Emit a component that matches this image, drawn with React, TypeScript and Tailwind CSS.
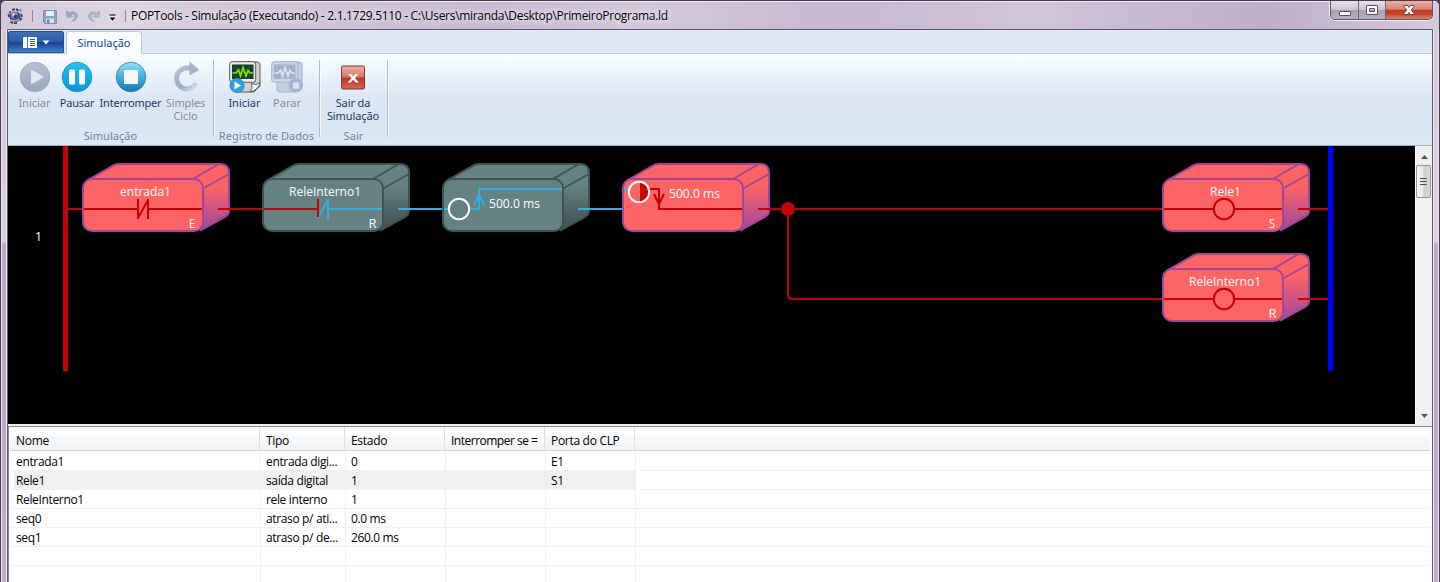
import React from "react";

const RED = "#c80000";
const CYAN = "#2fb0e6";

type BlockKind = "on" | "off";

function Block({ x, y, kind, children, exit }: { x: number; y: number; kind: BlockKind; children?: React.ReactNode; exit: string }) {
  const fill = kind === "on" ? "#ff6464" : "#648282";
  const stroke = kind === "on" ? "#a0469b" : "#415252";
  return (
    <g transform={`translate(${x} ${y})`}>
      <path d="M3 18 L31 1.6 Q33 0 37 0 H138 Q147 0 147 9 V47 Q147 51 143 53 L115 67 L100 60 L20 40 Z" fill={fill} />
      <path d="M121 24 L147 10 V47 Q147 51 143 53 L117 66 Z" fill={kind === "on" ? "url(#sideOn)" : "url(#sideOff)"} />
      <path d="M5 16.5 L31 1.6 Q33 0 37 0 H138 Q147 0 147 9 V47 Q147 50.500 143 52.800 L118 66.500" fill="none" stroke={stroke} strokeWidth="2" />
      <path d="M110 15.500 L136 0.500 M121 24.500 L147 10" fill="none" stroke={stroke} strokeWidth="2" />
      <rect x="1" y="15" width="120" height="52" rx="9" fill={fill} />
      {children}
      <rect x="1" y="15" width="120" height="52" rx="9" fill="none" stroke={stroke} strokeWidth="2" />
      <path d="M136 45 H152" stroke={exit} strokeWidth="2" />
    </g>
  );
}

function Label({ x, y, w, children }: { x: number; y: number; w: number; children: string }) {
  return (
    <text x={x} y={y} textLength={w} lengthAdjust="spacingAndGlyphs" fill="#fff" className="font-['Open_Sans',sans-serif] text-[12px]">
      {children}
    </text>
  );
}

function Diagram() {
  return (
    <svg viewBox="8 146 1407 278" width="1407" height="278" className="block shrink-0 bg-black">
      <defs>
        <linearGradient id="sideOn" x1="0" y1="0" x2="0" y2="1">
          <stop offset="0.2" stopColor="#ff6464" />
          <stop offset="0.95" stopColor="#a5489b" />
        </linearGradient>
        <linearGradient id="sideOff" x1="0" y1="0" x2="0" y2="1">
          <stop offset="0.2" stopColor="#648282" />
          <stop offset="0.95" stopColor="#415252" />
        </linearGradient>
      </defs>
      <Label x={35} y={241} w={7}>1</Label>
      <g fill="none" strokeWidth="2">
        <path d="M68 209 H83 M220 209 H263 M768 209 H1163 M1308 209 H1328 M1308 299 H1328" stroke={RED} />
        <path d="M788 209 V294 Q788 299 793 299 H1163" stroke={RED} />
        <path d="M398 209 H443 M578 209 H623" stroke={CYAN} />
      </g>
      <Block x={82} y={164} kind="on" exit={RED}>
        <path d="M2 45 H56 M56 35 V55 M66 35 V55 M56 54 L66 36 M66 45 H120" stroke={RED} strokeWidth="2" fill="none" />
        <Label x={38} y={32} w={51}>entrada1</Label>
        <Label x={107} y={64} w={6}>E</Label>
      </Block>
      <Block x={262} y={164} kind="off" exit={CYAN}>
        <path d="M56 54 L66 36 M66 35 V55 M66 45 H120" stroke={CYAN} strokeWidth="2" fill="none" />
        <path d="M2 45 H56 M56 35 V53" stroke={RED} strokeWidth="2" fill="none" />
        <Label x={27} y={32} w={72}>ReleInterno1</Label>
        <Label x={106.500} y={64} w={8}>R</Label>
      </Block>
      <Block x={442} y={164} kind="off" exit={CYAN}>
        <path d="M2 45 H8 M27 45 H37 V25 H120 M32 41 L37 30 L42 41" stroke={CYAN} strokeWidth="2" fill="none" />
        <circle cx="17" cy="45" r="10.200" fill="none" stroke="#fff" strokeWidth="2" />
        <Label x={47} y={44} w={51}>500.0 ms</Label>
      </Block>
      <Block x={622} y={164} kind="on" exit={RED}>
        <path d="M2 25 H7" stroke={CYAN} strokeWidth="2" />
        <path d="M27 25 H37 V45 H120 M32 30 L37 40 L42 30" stroke={RED} strokeWidth="2" fill="none" />
        <path d="M18 18 A10 10 0 0 1 18 38 Z" fill={RED} />
        <circle cx="17" cy="28" r="10.200" fill="none" stroke="#fff" strokeWidth="2" />
        <Label x={47} y={34} w={51}>500.0 ms</Label>
      </Block>
      <circle cx="788" cy="209" r="7" fill={RED} />
      <Block x={1162} y={164} kind="on" exit={RED}>
        <path d="M2 45 H52 M72 45 H120" stroke={RED} strokeWidth="2" />
        <circle cx="62" cy="45" r="10.200" fill="none" stroke={RED} strokeWidth="2" />
        <Label x={48} y={32} w={31}>Rele1</Label>
        <Label x={107} y={64} w={6}>S</Label>
      </Block>
      <Block x={1162} y={254} kind="on" exit={RED}>
        <path d="M2 45 H52 M72 45 H120" stroke={RED} strokeWidth="2" />
        <circle cx="62" cy="45" r="10.200" fill="none" stroke={RED} strokeWidth="2" />
        <Label x={27} y={32} w={72}>ReleInterno1</Label>
        <Label x={106.500} y={64} w={8}>R</Label>
      </Block>
      <rect x="63" y="146" width="5" height="225" fill={RED} />
      <rect x="1328" y="146" width="5" height="225" fill="#0000ff" />
    </svg>
  );
}

function TitleBar() {
  return (
    <div className="flex h-[28px] shrink-0 items-start border-t border-[#f3eef6] bg-[linear-gradient(90deg,#d3c8da_0%,#ddd5e3_8%,#d3c4da_16%,#cfc1d7_26%,#c9b9d2_34%,#d4c7dc_45%,#c8b8d2_58%,#d2c4db_72%,#bfaecb_88%,#d4cadd_100%)]">
      <div className="flex h-[27px] min-w-0 grow items-center pl-[6px]">
        <svg width="16" height="16" viewBox="0 0 16 16" className="shrink-0">
          <circle cx="8" cy="8.500" r="5.500" fill="#4a5083" />
          <path d="M2 9 Q1 5 4 4 M5 2 Q9 0 12 3 M14 6 Q16 10 12 13 M10 15 Q5 16 3 13" fill="none" stroke="#3d4556" strokeWidth="2" strokeDasharray="3 1" />
          <path d="M11 1 L15 1 L14 5 Z" fill="#8d96a8" />
          <path d="M3 6 Q6 2 11 4 M4 12 Q8 14 12 11" fill="none" stroke="#a9b3cc" strokeWidth="1.200" />
          <circle cx="7.500" cy="7.500" r="3" fill="#9da7ce" />
          <circle cx="8.500" cy="8.500" r="2" fill="#2f36a0" />
          <circle cx="6.500" cy="6.500" r="1" fill="#eef" />
        </svg>
        <div className="ml-[9px] h-[12px] w-px bg-[#8c8494]" />
        <svg width="14" height="14" viewBox="0 0 14 14" className="ml-[10px] mt-[2px] shrink-0">
          <path d="M0.500 0.500 H13.500 V13.500 H1.500 L0.500 12.500 Z" fill="#8da4c0" stroke="#7b94b4" />
          <path d="M3 1 H11 V6 H3 Z" fill="#e7edf4" />
          <path d="M3 8.500 H11 V13 H3 Z" fill="#dce4ed" />
          <path d="M4 9.500 H6.500 V13 H4 Z" fill="#6f88a8" />
        </svg>
        <svg width="12" height="13" viewBox="0 0 12 13" className="ml-[9px] mt-[2px] shrink-0">
          <path d="M0.500 1 L1.200 7.500 L7 6.500 L4.800 4.700 Q8 3 9 6 Q9 9 5.500 11.500 Q11.500 10.500 11.500 5.500 Q10 0 3.500 2.800 Z" fill="#9cacc5" stroke="#899bb8" strokeWidth="0.700" />
        </svg>
        <svg width="12" height="13" viewBox="0 0 12 13" className="ml-[10px] mt-[2px] shrink-0">
          <path transform="translate(12 0) scale(-1 1)" d="M0.500 1 L1.200 7.500 L7 6.500 L4.800 4.700 Q8 3 9 6 Q9 9 5.500 11.500 Q11.500 10.500 11.500 5.500 Q10 0 3.500 2.800 Z" fill="#acb8cb" stroke="#97a6bc" strokeWidth="0.700" />
        </svg>
        <svg width="9" height="8" viewBox="0 0 9 8" className="ml-[8px] mt-[4px] shrink-0">
          <path d="M1 2.500 H8 L8 4.500 L4.500 8 L1 4.500 Z" fill="#fff" opacity="0.700" />
          <path d="M1.500 1 H7.500" stroke="#000" />
          <path d="M1.500 3.500 H7.500 L4.500 6.700 Z" fill="#000" />
        </svg>
        <div className="ml-[8px] h-[12px] w-px bg-[#8c8494]" />
        <span className="ml-[5px] whitespace-pre font-['Open_Sans',sans-serif] text-[12px] leading-[16px] tracking-[-0.3px] text-black [text-shadow:0_0_6px_#fff,0_0_8px_#ffffffaa]">
          POPTools - Simulação (Executando) - 2.1.1729.5110 - C:\Users\miranda\Desktop\PrimeiroPrograma.ld
        </span>
      </div>
      <div className="-mt-px mr-[6px] flex h-[19px] w-[103px] shrink-0 overflow-hidden rounded-b-[5px] border border-t-0 border-[#5d5567] shadow-[0_1px_0_#f3eef6,-1px_0_0_#f3eef6]">
        <div className="flex w-[28px] items-center justify-center border-r border-[#6d6578] bg-[linear-gradient(#e7e2eb_0%,#cdc5d4_48%,#a69bb1_50%,#bbb1c6_100%)]">
          <svg width="12" height="6" viewBox="0 0 12 6" className="mt-[7px]"><rect x="0.500" y="0.500" width="11" height="4" rx="0.500" fill="#fff" stroke="#555264" /></svg>
        </div>
        <div className="flex w-[27px] items-center justify-center border-r border-[#6d6578] bg-[linear-gradient(#e7e2eb_0%,#cdc5d4_48%,#a69bb1_50%,#bbb1c6_100%)]">
          <svg width="12" height="10" viewBox="0 0 12 10"><path fillRule="evenodd" d="M0.500 0.500 H11.500 V9.500 H0.500 Z M3.500 3.500 V6.500 H8.500 V3.500 Z" fill="#fff" stroke="#555264" /></svg>
        </div>
        <div className="flex grow items-center justify-center bg-[linear-gradient(#eab0a5_0%,#d98270_46%,#bf3c25_50%,#c8452a_75%,#dc8868_100%)]">
          <svg width="12" height="11" viewBox="0 0 12 11"><path d="M1 0.500 H4.500 L6 2.500 L7.500 0.500 H11 V1.500 L8.300 5 L11 8.500 V9.500 H7.500 L6 7.500 L4.500 9.500 H1 V8.500 L3.700 5 L1 1.500 Z" fill="#fff" stroke="#55495b" /></svg>
        </div>
      </div>
    </div>
  );
}

function Disc({ tone, children }: { tone: string; children: React.ReactNode }) {
  return (
    <svg width="32" height="32" viewBox="0 0 32 32">
      <defs>
        <linearGradient id="discgrey" x1="0" y1="0" x2="0" y2="1"><stop stopColor="#bac2d2" /><stop offset="1" stopColor="#98a5c0" /></linearGradient>
        <linearGradient id="discblue" x1="0" y1="0" x2="0" y2="1"><stop stopColor="#25c2f3" /><stop offset="1" stopColor="#0795e1" /></linearGradient>
        <linearGradient id="discsky" x1="0" y1="0" x2="0" y2="1"><stop stopColor="#92e2f5" /><stop offset="0.500" stopColor="#43b1db" /><stop offset="1" stopColor="#0b78b8" /></linearGradient>
      </defs>
      <circle cx="16" cy="16" r="14.800" fill={`url(#disc${tone})`} stroke={tone === "grey" ? "#97a3bb" : tone === "blue" ? "#168fc4" : "#2c7fa6"} strokeWidth="0.800" />
      {children}
    </svg>
  );
}

function Monitor({ muted }: { muted?: boolean }) {
  const c = muted
    ? { back: "#c3cde0", front: "#cdd6e7", edge: "#a2b0ce", screen: "#a6b4d2", wave: "#dee6f2", grid: "#98a8c9" }
    : { back: "#d2d2d2", front: "#ececec", edge: "#595959", screen: "#123c2c", wave: "#83e600", grid: "#2c5b47" };
  return (
    <svg width="32" height="32" viewBox="0 0 32 32">
      <path d="M9 1 H28 Q31 1 31 4 V25 L25 31 H9 Q6 31 6 28 V4 Z" fill={c.back} stroke={c.edge} />
      <rect x="0.700" y="0.700" width="26" height="20.500" rx="2.500" fill={c.front} stroke={c.edge} />
      <rect x="3" y="3.500" width="21.500" height="14.500" fill={c.screen} />
      <path d="M3 7 H24 M3 11 H24 M3 15 H24 M8 4 V18 M14 4 V18 M20 4 V18" stroke={c.grid} strokeWidth="0.600" />
      <path d="M3.500 12 H7 L9.500 9 L11.500 15 L14 6.500 L17 15 L19 9.500 L21 12 H24" fill="none" stroke={c.wave} strokeWidth="1.700" />
      {muted ? (
        <g><circle cx="25" cy="24.500" r="7" fill="#a4b2cf" /><rect x="21.800" y="21.300" width="6.500" height="6.500" rx="0.500" fill="#dde4ef" /></g>
      ) : (
        <g>
          <path d="M20.500 31 Q24 28 22.500 22.500 Q27 25 31 21.500 Q30 29 20.500 31 Z" fill="#f5f5f5" stroke="#555" strokeWidth="0.900" />
          <circle cx="8" cy="24.500" r="7.200" fill="#2aa3dd" stroke="#1d80b8" strokeWidth="0.600" />
          <path d="M5.500 20.500 L12 24.500 L5.500 28.500 Z" fill="#fff" />
        </g>
      )}
    </svg>
  );
}

function Tool({ className, label, muted, icon }: { className: string; label: string; muted?: boolean; icon: React.ReactNode }) {
  return (
    <div className={`flex shrink-0 flex-col items-center ${className}`}>
      <div className="flex h-[32px] items-center">{icon}</div>
      <div className={`mt-[3px] whitespace-pre text-center leading-[13px] ${muted ? "text-[#8d8d8d]" : "text-[#1e395b]"}`}>{label}</div>
    </div>
  );
}

function Group({ className, title, children }: { className: string; title: string; children: React.ReactNode }) {
  return (
    <div className={`flex shrink-0 flex-col border-r border-[#afbbcf] shadow-[1px_0_0_#f6f9fd] ${className}`}>
      <div className="flex h-[69px] shrink-0 pt-[1px]">{children}</div>
      <div className="h-[8px] whitespace-pre text-center leading-[14px] tracking-[0.05px] text-[#72839c]">{title}</div>
    </div>
  );
}

function Ribbon() {
  return (
    <div className="flex h-[116px] shrink-0 flex-col bg-[#dfe9f5] font-['Noto_Sans',sans-serif] text-[11px]">
      <div className="flex h-[24px] shrink-0 items-end border-b border-[#bac9db]">
        <div className="flex h-[22px] w-[56px] items-center justify-center gap-[5px] rounded-t-[2px] border border-[#234f91] bg-[linear-gradient(#3f72b9_0%,#2b5ca8_48%,#153f88_50%,#2c69b5_80%,#3c86ce_100%)]">
          <svg width="14" height="11" viewBox="0 0 14 11"><rect width="14" height="11" rx="0.500" fill="#fff" /><path d="M4.500 0 V11" stroke="#4a76b5" /><path d="M7 2.500 H12 M7 4.500 H12 M7 6.500 H12 M7 8.500 H12" stroke="#2a5ca5" /></svg>
          <svg width="8" height="5" viewBox="0 0 8 5"><path d="M0.500 0.500 H7.500 L4 4.500 Z" fill="#fff" /></svg>
        </div>
        <div className="-mb-px ml-[2px] flex h-[23px] w-[76px] items-center justify-center rounded-t-[3px] border border-b-0 border-[#bac9db] bg-[#f8fbff] text-[#15428b]">Simulação</div>
      </div>
      <div className="flex h-[90px] shrink-0 bg-[linear-gradient(#f9fdff_0%,#e8f1fa_28%,#dce6f4_50%,#dae6f4_85%,#dde9f5_100%)] pt-[6px]">
        <Group className="h-[77px] w-[206px]" title="Simulação">
          <Tool className="ml-[5px] w-[43px]" label="Iniciar" muted icon={<Disc tone="grey"><path d="M12 8.500 L25 16 L12 23.500 Z" fill="#e5ebf4" /></Disc>} />
          <Tool className="w-[42px] tracking-[-0.15px]" label="Pausar" icon={<Disc tone="blue"><rect x="8" y="8.500" width="6" height="15" rx="1.500" fill="#fff" /><rect x="18" y="8.500" width="6" height="15" rx="1.500" fill="#fff" /></Disc>} />
          <Tool className="w-[65px] tracking-[-0.2px]" label="Interromper" icon={<Disc tone="sky"><rect x="9" y="9" width="14" height="14" fill="#f5f5f5" /></Disc>} />
          <Tool
            className="w-[45px] tracking-[-0.1px]"
            label={"Simples\nCiclo"}
            muted
            icon={
              <svg width="30" height="32" viewBox="0 0 30 32">
                <defs><linearGradient id="loop" x1="0" y1="0" x2="1" y2="1"><stop stopColor="#b8c3d5" /><stop offset="0.600" stopColor="#9cabc5" /><stop offset="1" stopColor="#dce6f4" /></linearGradient></defs>
                <path d="M20 7 H15.500 A10.500 10.500 0 1 0 25.500 22" fill="none" stroke="url(#loop)" strokeWidth="5" />
                <path d="M18.500 0.500 L28.500 9 L18.500 14.500 Z" fill="#a3b1c9" />
              </svg>
            }
          />
        </Group>
        <Group className="h-[77px] w-[106px]" title="Registro de Dados">
          <Tool className="ml-[9px] w-[43px]" label="Iniciar" icon={<Monitor />} />
          <Tool className="w-[42px]" label="Parar" muted icon={<Monitor muted />} />
        </Group>
        <Group className="h-[77px] w-[68px]" title="Sair">
          <Tool
            className="w-[66px] tracking-[-0.1px]"
            label={"Sair da\nSimulação"}
            icon={
              <svg width="24" height="25" viewBox="0 0 24 25">
                <defs><linearGradient id="exit" x1="0" y1="0" x2="0" y2="1"><stop stopColor="#efb0a4" /><stop offset="0.480" stopColor="#dd7564" /><stop offset="0.520" stopColor="#be3223" /><stop offset="1" stopColor="#d96550" /></linearGradient></defs>
                <rect x="0.500" y="1" width="23" height="23" rx="1.500" fill="url(#exit)" stroke="#7d3632" />
                <path d="M7 9 H10 L12.200 11.300 L14.500 9 H17.500 L14 13 L17.800 17.500 H14.700 L12.200 14.700 L9.700 17.500 H6.700 L10.500 13 Z" fill="#fff" />
              </svg>
            }
          />
        </Group>
      </div>
      <div className="h-px shrink-0 bg-[#dce9f5]" />
      <div className="h-px shrink-0 bg-[#9eb0c6]" />
    </div>
  );
}

function ScrollBar() {
  return (
    <div className="flex w-[17px] shrink-0 flex-col items-center border-l border-white bg-[#f0f0f0]">
      <svg width="7" height="4" viewBox="0 0 7 4" className="mt-[9px] shrink-0"><path d="M0 4 L3.500 0 L7 4 Z" fill="#555" /></svg>
      <div className="mt-[6px] flex h-[33px] w-[15px] shrink-0 flex-col items-center justify-center gap-[2px] self-start rounded-[2px] border border-[#979797] bg-[linear-gradient(90deg,#f7f7f7,#e8e8e8_45%,#cfcfcf_55%,#d8d8d8)]">
        <div className="h-px w-[7px] bg-[#505050]" />
        <div className="h-px w-[7px] bg-[#505050]" />
        <div className="h-px w-[7px] bg-[#505050]" />
      </div>
      <div className="grow" />
      <svg width="7" height="4" viewBox="0 0 7 4" className="mb-[6px] shrink-0"><path d="M0 0 L3.500 4 L7 0 Z" fill="#555" /></svg>
    </div>
  );
}

const rows = [
  ["entrada1", "entrada digi...", "0", "", "E1"],
  ["Rele1", "saída digital", "1", "", "S1"],
  ["ReleInterno1", "rele interno", "1", "", ""],
  ["seq0", "atraso p/ ati...", "0.0 ms", "", ""],
  ["seq1", "atraso p/ de...", "260.0 ms", "", ""],
  ["", "", "", "", ""],
  ["", "", "", "", ""],
];
const columns = "grid grid-cols-[251px_85px_100px_100px_90px_1fr]";

function VariableTable() {
  return (
    <div className="flex grow flex-col border-l border-[#828790] bg-white pl-px font-['Open_Sans',sans-serif] text-[12px] tracking-[-0.35px] text-black">
      <div className={`${columns} mr-[2px] h-[24px] shrink-0 border-b border-[#d5d5d5] bg-[linear-gradient(#fff_0%,#fff_40%,#f7f8fa_42%,#f1f2f4_100%)] leading-[27px]`}>
        {["Nome", "Tipo", "Estado", "Interromper se =", "Porta do CLP"].map((h) => (
          <div key={h} className={`-ml-px mr-px h-[23px] whitespace-pre border-r border-[#dfe0e2] pl-[6px] first:ml-0 ${h.endsWith("=") ? "tracking-[-0.5px]" : "tracking-[-0.3px]"}`}>{h}</div>
        ))}
      </div>
      <div className="mr-[2px] flex flex-col pt-px">
        {rows.map((row, r) => (
          <div key={r} className={`${columns} h-[19px] shrink-0 leading-[20px]`}>
            {row.map((cell, c) => (
              <div key={c} className={`border-b border-r border-[#f0f0f0] ${c === 0 ? "pl-[4px]" : ""}`}>
                <div className={`h-[18px] whitespace-pre ${c === 0 ? "pl-[2px]" : "pl-[5px]"} ${r === 1 ? "bg-[#f0f0f0]" : ""}`}>{cell}</div>
              </div>
            ))}
            <div className="border-b border-[#f0f0f0]" />
          </div>
        ))}
      </div>
    </div>
  );
}

export default function App() {
  return (
    <div className="flex h-[582px] w-[1440px] flex-col overflow-hidden bg-[#4c3f53]">
      <div className="flex h-[582px] flex-col overflow-hidden rounded-t-[6px] border border-b-0 border-[#443b4b] bg-[#d6cbdd]">
        <TitleBar />
        <div className="flex h-[553px] shrink-0">
          <div className="w-[6px] shrink-0 border-x border-[#eee8f2] bg-[linear-gradient(#d3c8dc_0,#d9d0e1_213px,#baa7c9_215px,#bfadcb_100%)]" />
          <div className="flex w-[1426px] shrink-0 flex-col border border-b-0 border-[#615a6a]">
            <Ribbon />
            <div className="flex h-[278px] shrink-0">
              <Diagram />
              <ScrollBar />
            </div>
            <div className="h-[2px] shrink-0 bg-[#f0f0f0]" />
            <div className="h-px shrink-0 bg-[#828790]" />
            <VariableTable />
          </div>
          <div className="w-[6px] shrink-0 border-x border-[#eee8f2] bg-[linear-gradient(#d3c8dc_0,#dcd4e3_213px,#baa7c9_215px,#bfadcb_100%)]" />
        </div>
      </div>
    </div>
  );
}
